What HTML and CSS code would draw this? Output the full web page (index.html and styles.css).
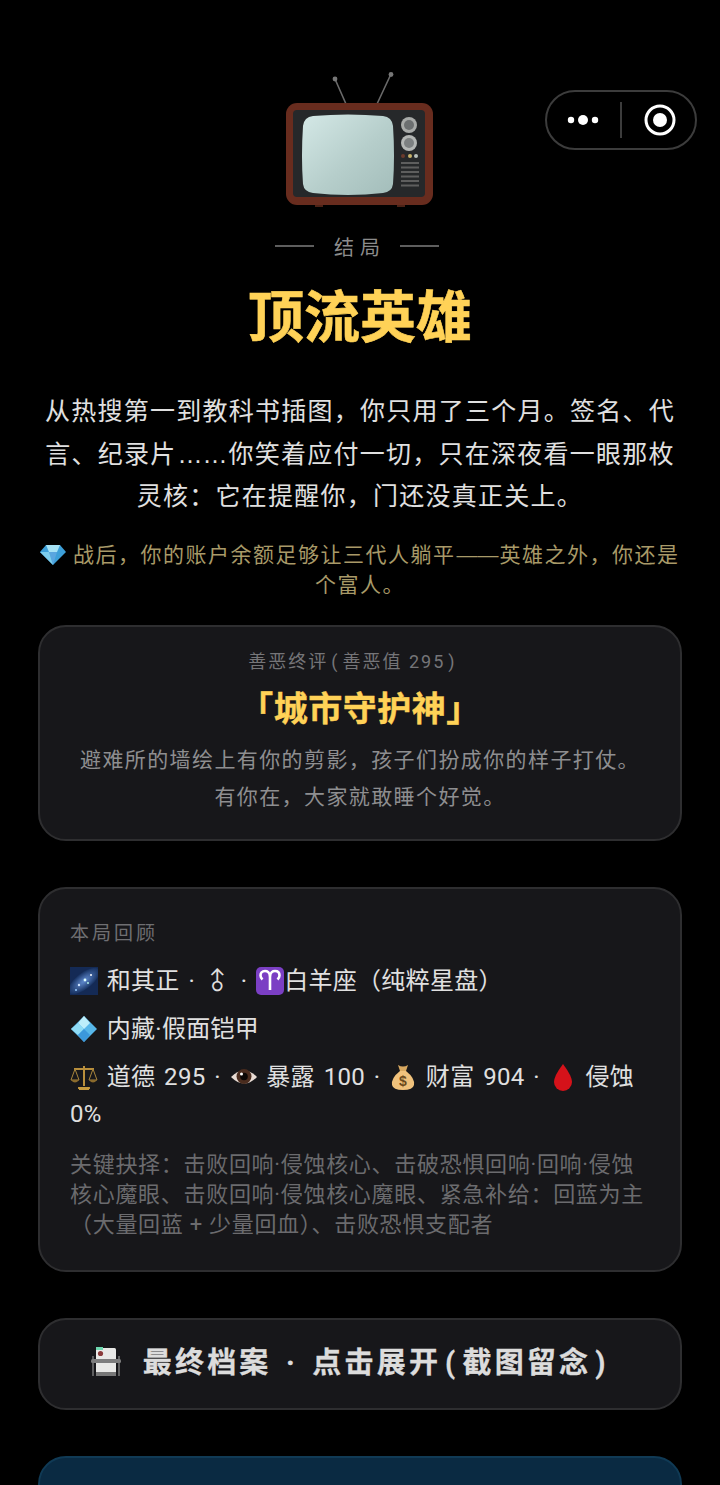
FILE: index.html
```html
<!DOCTYPE html>
<html lang="zh-CN">
<head>
    <meta charset="UTF-8">
    <meta name="viewport" content="width=device-width, initial-scale=1.0">
    <title>结局</title>
    <link rel="stylesheet" href="styles.css">
</head>
<body>
    <div class="capsule">
        <svg class="capsule-dots" viewBox="0 0 32 12"><circle cx="4" cy="6" r="3.2"/><circle cx="16" cy="6" r="5"/><circle cx="28" cy="6" r="3.2"/></svg>
        <span class="capsule-line"></span>
        <svg class="capsule-target" viewBox="0 0 32 32"><circle cx="16" cy="16" r="14" fill="none" stroke="#fff" stroke-width="3"/><circle cx="16" cy="16" r="7" fill="#fff"/></svg>
    </div>

    <main class="page">
        <svg class="tv" viewBox="0 0 150 136">
            <defs>
                <linearGradient id="screen" x1="0" y1="0" x2="1" y2="1">
                    <stop offset="0" stop-color="#d4e8e6"/>
                    <stop offset="0.55" stop-color="#b6cecb"/>
                    <stop offset="1" stop-color="#a3bdba"/>
                </linearGradient>
            </defs>
            <path d="M61 32 L50 7 M92 32 L106 2" stroke="#6a6a6a" stroke-width="1.6"/>
            <circle cx="50" cy="7" r="2.400" fill="#777"/>
            <circle cx="106" cy="2.500" r="2.400" fill="#777"/>
            <path d="M30 131H38V135H30ZM112 131H120V135H112Z" fill="#4d2216"/>
            <rect x="1" y="31" width="147" height="102" rx="11" fill="#682c1e"/>
            <rect x="8" y="38" width="132" height="87" rx="4" fill="#26282a"/>
            <path d="M28 44 Q63 41 98 44 Q107 45 108 54 Q110 84 108 112 Q107 120 98 121 Q63 125 28 121 Q19 120 18 112 Q16 84 18 54 Q19 45 28 44Z" fill="url(#screen)"/>
            <circle cx="124" cy="53" r="8" fill="#a8aaa8"/><circle cx="124" cy="53" r="5" fill="#6c6f70"/>
            <circle cx="124" cy="71" r="8" fill="#b4b6b4"/><circle cx="124" cy="71" r="5" fill="#7d8081"/>
            <circle cx="118" cy="84" r="2" fill="#6b3a2c"/><circle cx="125" cy="84" r="2" fill="#c9b36a"/><circle cx="131" cy="84" r="2" fill="#b8c0bb"/>
            <path d="M116 91H134M116 95.500H134M116 100H134M116 104.500H134M116 109H134M116 113.500H134" stroke="#5e5e5e" stroke-width="2"/>
        </svg>

        <div class="eyebrow"><span class="eyebrow-line"></span><span class="eyebrow-text">结局</span><span class="eyebrow-line"></span></div>
        <h1 class="title">顶流英雄</h1>
        <p class="story">从热搜第一到教科书插图，你只用了三个月。签名、代言、纪录片<span class="wide-punct">……</span>你笑着应付一切，只在深夜看一眼那枚灵核：它在提醒你，门还没真正关上。</p>
        <p class="note">
            <svg class="emoji" viewBox="0 0 26 26"><path d="M6 4H20L26 11L13 24L0 11Z" fill="#3d9fd8"/><path d="M6 4H20L17 11H9Z" fill="#a5e2f5"/><path d="M9 11H17L13 24Z" fill="#5aa6e0"/><path d="M0 11H9L13 24Z" fill="#7ccdec"/></svg>
            战后，你的账户余额足够让三代人躺平<span class="wide-punct">——</span>英雄之外，你还是个富人。
        </p>

        <section class="card verdict">
            <div class="verdict-label">善恶终评<span class="paren">(</span>善恶值 295<span class="paren">)</span></div>
            <div class="verdict-name">「城市守护神」</div>
            <p class="verdict-text">避难所的墙绘上有你的剪影，孩子们扮成你的样子打仗。有你在，大家就敢睡个好觉。</p>
        </section>

        <section class="card recap">
            <div class="recap-label">本局回顾</div>
            <p class="recap-row">
                <svg class="emoji" viewBox="0 0 28 28">
                    <defs>
                        <radialGradient id="nebula">
                            <stop offset="0" stop-color="#5f8ad0"/>
                            <stop offset="1" stop-color="#16305f"/>
                        </radialGradient>
                    </defs>
                    <rect width="28" height="28" fill="#142a55"/>
                    <ellipse cx="14" cy="14" rx="19" ry="8" transform="rotate(-38 14 14)" fill="url(#nebula)"/>
                    <circle cx="9" cy="18" r="1.200" fill="#cfe4ff"/><circle cx="15" cy="13" r="1.400" fill="#dff"/><circle cx="21" cy="8" r="1" fill="#fff"/><circle cx="18" cy="16" r="0.900" fill="#bfe"/><circle cx="6" cy="23" r="1" fill="#9cf"/>
                </svg>
                和其正 · <span class="gender">♂</span> ·
                <svg class="emoji" viewBox="0 0 28 28"><rect width="28" height="28" rx="5" fill="#7b3fc4"/><path d="M14 23V10C14 5 11 4 9 4C6 4 4.500 6 4.500 8.500C4.500 10.500 5.500 11.500 6.500 12.500M14 10C14 5 17 4 19 4C22 4 23.500 6 23.500 8.500C23.500 10.500 22.500 11.500 21.500 12.500" fill="none" stroke="#fff" stroke-width="2.600"/></svg>白羊座（纯粹星盘）
            </p>
            <p class="recap-row">
                <svg class="emoji" viewBox="0 0 28 28"><path d="M14 1L27 14L14 27L1 14Z" fill="#57b7ea"/><path d="M14 1L20 8L14 14L8 8Z" fill="#bdeefb"/><path d="M1 14L8 8L14 14L8 20Z" fill="#8fdcf6"/><path d="M14 14L20 20L14 27L8 20Z" fill="#3b98dc"/></svg>
                内藏·假面铠甲
            </p>
            <p class="recap-row">
                <svg class="emoji" viewBox="0 0 28 28"><path d="M14 3V23M8 25H20M4 6H24" stroke="#b98f3c" stroke-width="2" fill="none"/><path d="M5 6L1 17H9ZM23 6L19 17H27Z" fill="none" stroke="#a8853c"/><path d="M1 17Q5 22 9 17ZM19 17Q23 22 27 17Z" fill="#8a6a2c"/><rect x="9" y="24" width="10" height="3" fill="#c69a3e"/></svg>
                道德 295 ·
                <svg class="emoji" viewBox="0 0 28 28"><path d="M1 14Q14 1 27 14Q14 27 1 14Z" fill="#e8dcd4"/><circle cx="14" cy="13.500" r="7.500" fill="#4a2c1e"/><circle cx="14" cy="13.500" r="3.800" fill="#0c0806"/><circle cx="11.500" cy="11" r="1.500" fill="#fff"/></svg>
                暴露 100 ·
                <svg class="emoji" viewBox="0 0 28 28"><path d="M9 2Q14 5 19 2L17 8H11Z" fill="#d8a860"/><path d="M11 8H17Q26 15 25 22Q24 27 14 27Q4 27 3 22Q2 15 11 8Z" fill="#f0c27c"/><text class="bag-sign" x="14" y="23">$</text></svg>
                财富 904 ·
                <svg class="emoji" viewBox="0 0 28 28"><path d="M14 1Q23 13 23 19A9 9 0 0 1 5 19Q5 13 14 1Z" fill="#d5121a"/></svg>
                侵蚀 0%
            </p>
            <p class="recap-keys">关键抉择：击败回响·侵蚀核心、击破恐惧回响·回响·侵蚀核心魔眼、击败回响·侵蚀核心魔眼、紧急补给：回蓝为主（大量回蓝 + 少量回血）、击败恐惧支配者</p>
        </section>

        <button class="card archive" type="button">
            <svg class="emoji archive-icon" viewBox="0 0 32 32"><path d="M3 10V30M29 10V30" stroke="#777" stroke-width="1.500"/><rect x="6" y="2" width="20" height="25" rx="1.500" fill="#e8e8e6"/><rect x="6" y="1" width="7" height="3" fill="#6fd8b0"/><circle cx="10.500" cy="7.500" r="2.600" fill="#8a3a3a"/><rect x="1" y="13" width="30" height="4" rx="1.500" fill="#7d7d7d"/><rect x="6" y="26" width="20" height="4" fill="#777"/></svg>
            最终档案 · 点击展开<span class="paren">(</span>截图留念<span class="paren">)</span>
        </button>

        <section class="teal-card"></section>
    </main>
</body>
</html>
```
FILE: styles.css
```css
* {
    box-sizing: border-box;
}
html, body {
    margin: 0;
    background: #000;
}
body {
    position: relative;
    height: 1485px;
    overflow: hidden;
    font-family: Roboto, "Noto Sans CJK SC", sans-serif;
    color: #e8e8e8;
}
.capsule {
    position: absolute;
    top: 90px;
    left: 545px;
    width: 152px;
    height: 60px;
    display: flex;
    align-items: center;
    border: 2px solid #3c3c3c;
    border-radius: 30px;
}
.capsule-dots {
    width: 32px;
    height: 12px;
    margin-left: 20px;
    fill: #fff;
}
.capsule-line {
    width: 2px;
    height: 36px;
    margin-left: 21px;
    background: #3c3c3c;
}
.capsule-target {
    width: 32px;
    height: 32px;
    margin-left: 22px;
}
.page {
    display: flex;
    flex-direction: column;
    align-items: center;
    padding: 72px 38px 0;
}
.tv {
    width: 150px;
    height: 136px;
    display: block;
    filter: blur(0.5px);
}
.eyebrow {
    display: flex;
    align-items: center;
    gap: 20px;
    margin-top: 21px;
    height: 34px;
    padding-right: 6px;
    font-size: 20px;
    letter-spacing: 6px;
    color: #8c8c8c;
}
.eyebrow-text {
    margin-right: -6px;
}
.eyebrow-line {
    width: 39px;
    height: 2px;
    background: #5e5e5e;
}
.title {
    margin: 10px 0 0;
    height: 90px;
    font-size: 56px;
    line-height: 90px;
    font-weight: 700;
    color: #ffd257;
    -webkit-text-stroke: 0.6px #ffd257;
}
.story {
    margin: 28px 0 0;
    width: 100%;
    text-align: center;
    font-size: 25px;
    line-height: 42px;
    letter-spacing: 1.25px;
    color: #e0e0e0;
}
.wide-punct {
    font-family: "Liberation Sans", sans-serif;
    letter-spacing: 0;
    margin: 0 1px;
}
.note {
    margin: 22px 0 0;
    width: 100%;
    text-align: center;
    font-size: 21px;
    line-height: 30px;
    letter-spacing: 1.5px;
    color: #a89a68;
}
.emoji {
    display: inline-block;
    width: 26px;
    height: 26px;
    vertical-align: -5px;
}
.card {
    width: 100%;
    background: #17171a;
    border: 2px solid #2e2e30;
    border-radius: 28px;
}
.verdict {
    margin-top: 25px;
    height: 216px;
    padding: 20px 36px 0;
    text-align: center;
}
.verdict-label {
    padding-right: 12px;
    font-size: 18px;
    line-height: 30px;
    letter-spacing: 2px;
    color: #757578;
}
.paren {
    margin: 0 3px;
}
.verdict-name {
    margin-top: 7px;
    font-size: 34px;
    line-height: 50px;
    letter-spacing: 0.5px;
    font-weight: 700;
    color: #ffd257;
    -webkit-text-stroke: 0.4px #ffd257;
}
.verdict-text {
    margin: 8px 0 0;
    font-size: 21px;
    line-height: 37px;
    letter-spacing: 1.4px;
    color: #8e8e90;
}
.recap {
    margin-top: 46px;
    height: 385px;
    padding: 30px 30px 0;
}
.recap-label {
    font-size: 19px;
    line-height: 30px;
    letter-spacing: 3px;
    color: #6f6f72;
}
.recap-row {
    margin: 14px 0 0;
    font-size: 24px;
    line-height: 37px;
    letter-spacing: 0.3px;
    word-spacing: 2.5px;
    color: #e0e0e0;
}
.recap-row + .recap-row {
    margin-top: 11px;
}
.recap-row .emoji {
    width: 28px;
    height: 28px;
    vertical-align: -6px;
}
.gender {
    display: inline-block;
    margin: 0 2px;
    font-size: 24px;
    line-height: 1;
    transform: rotate(-45deg);
}
.bag-sign {
    font-family: "Liberation Sans", sans-serif;
    font-size: 14px;
    font-weight: 700;
    text-anchor: middle;
    fill: #6b4a1c;
}
.recap-keys {
    margin: 17px 0 0;
    font-size: 22px;
    line-height: 30px;
    letter-spacing: 0.7px;
    color: #6b6b6e;
}
.archive {
    margin-top: 46px;
    height: 92px;
    padding: 0 17px 8px 0;
    font-family: inherit;
    font-size: 29px;
    font-weight: 700;
    letter-spacing: 3.2px;
    word-spacing: 4px;
    color: #dcdcdc;
    -webkit-text-stroke: 0.3px #dcdcdc;
}
.archive .paren {
    margin: 0 4px;
}
.archive-icon {
    width: 32px;
    height: 32px;
    vertical-align: -5px;
    margin-right: 6px;
}
.teal-card {
    width: 100%;
    height: 120px;
    margin-top: 46px;
    background: #0a2a42;
    border: 2px solid #103a55;
    border-radius: 28px;
}
```
